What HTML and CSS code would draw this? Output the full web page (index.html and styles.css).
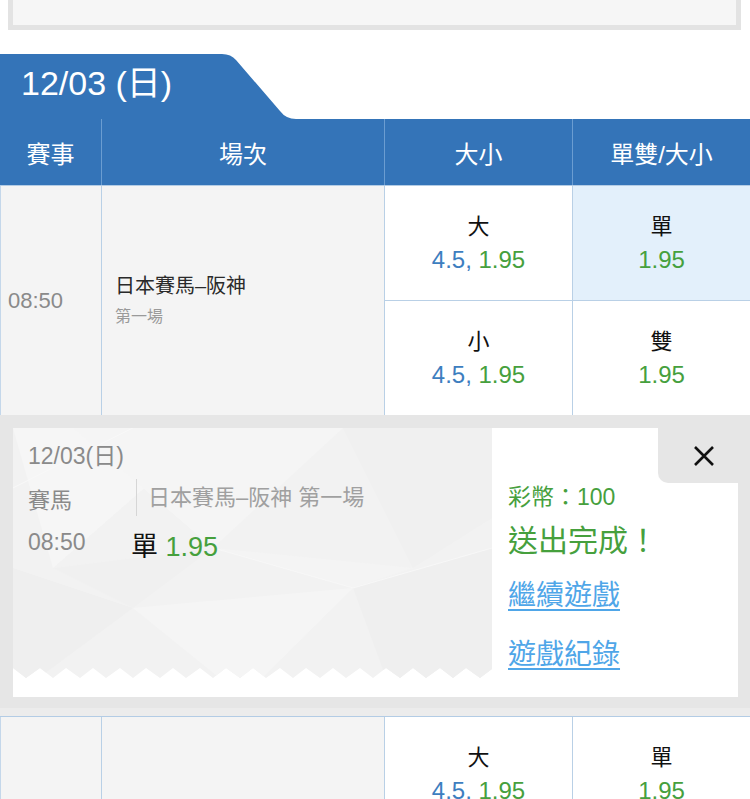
FILE: index.html
```html
<!DOCTYPE html>
<html lang="zh-Hant">
<head>
<meta charset="utf-8">
<title>賽事</title>
<link rel="stylesheet" href="styles.css">
</head>
<body>
<div class="topbox"></div>

<section class="day">
  <div class="tab">
    <svg class="tab-shape" viewBox="0 0 300 65" width="300" height="65" aria-hidden="true">
      <path d="M0 0 H222 Q231 0 236 6 L280 57 Q286 65 296 65 L300 65 V65 H0 Z" fill="#3474b8"/>
    </svg>
    <span class="tab-text">12/03 (日)</span>
  </div>

  <div class="thead">
    <div class="th">賽事</div>
    <div class="th">場次</div>
    <div class="th">大小</div>
    <div class="th">單雙/大小</div>
  </div>

  <div class="row">
    <div class="cell time">08:50</div>
    <div class="cell race">
      <div class="race-name">日本賽馬–阪神</div>
      <div class="race-no">第一場</div>
    </div>
    <div class="odds-col">
      <div class="odd"><div class="odd-label">大</div><div class="odd-val"><span class="num-blue">4.5,</span> <span class="num-green">1.95</span></div></div>
      <div class="odd"><div class="odd-label">小</div><div class="odd-val"><span class="num-blue">4.5,</span> <span class="num-green">1.95</span></div></div>
    </div>
    <div class="odds-col">
      <div class="odd selected"><div class="odd-label">單</div><div class="odd-val"><span class="num-green">1.95</span></div></div>
      <div class="odd"><div class="odd-label">雙</div><div class="odd-val"><span class="num-green">1.95</span></div></div>
    </div>
  </div>

  <div class="band">
    <div class="ticket">
      <div class="ticket-main">
        <svg class="ticket-bg" viewBox="0 0 479 269" preserveAspectRatio="none" aria-hidden="true">
          <defs>
            <clipPath id="zz">
              <path d="M0 0 L0 240 L13 250 L27 240 L40 250 L53 240 L67 250 L80 240 L93 250 L107 240 L120 250 L133 240 L147 250 L160 240 L173 250 L187 240 L200 250 L213 240 L227 250 L240 240 L253 250 L267 240 L280 250 L293 240 L307 250 L320 240 L333 250 L347 240 L360 250 L373 240 L387 250 L400 240 L413 250 L427 240 L440 250 L453 240 L467 250 L479 241 L479 0 Z"/>
            </clipPath>
          </defs>
          <g clip-path="url(#zz)">
            <rect x="0" y="0" width="479" height="269" fill="#f2f2f2"/>
            <polygon points="0,0 200,0 40,140" fill="#f6f6f6"/>
            <polygon points="60,0 330,0 200,120" fill="#f5f5f5"/>
            <polygon points="330,0 479,0 479,90 400,140" fill="#f0f0f0"/>
            <polygon points="0,140 120,180 0,269" fill="#efefef"/>
            <polygon points="120,180 340,160 230,269" fill="#f5f5f5"/>
            <polygon points="340,160 479,120 479,269 380,269" fill="#efefef"/>
            <polygon points="40,140 200,120 120,180" fill="#f0f0f0"/>
            <polygon points="200,120 400,140 340,160" fill="#f4f4f4"/>
            <polyline points="0,60 120,0" fill="none" stroke="#f8f8f8" stroke-width="1"/>
            <polyline points="200,120 340,160 479,120" fill="none" stroke="#f7f7f7" stroke-width="1"/>
          </g>
        </svg>
        <div class="t-date">12/03(日)</div>
        <div class="t-race">
          <div class="t-label">賽馬</div>
          <div class="t-event">日本賽馬–阪神 第一場</div>
        </div>
        <div class="t-bet-row">
          <div class="t-time">08:50</div>
          <div class="t-bet">單 <span class="num-green">1.95</span></div>
        </div>
      </div>
      <div class="ticket-side">
        <div class="t-stake">彩幣：100</div>
        <div class="t-done">送出完成！</div>
        <a class="t-link first" href="#">繼續遊戲</a>
        <a class="t-link" href="#">遊戲紀錄</a>
      </div>
      <div class="t-close" aria-label="關閉">
        <svg viewBox="0 0 22 22" width="22" height="22" aria-hidden="true">
          <path d="M2 2 L20 20 M20 2 L2 20" stroke="#111" stroke-width="2.6" stroke-linecap="butt" fill="none"/>
        </svg>
      </div>
    </div>
  </div>

  <div class="row">
    <div class="cell time">08:50</div>
    <div class="cell race">
      <div class="race-name">日本賽馬–阪神</div>
      <div class="race-no">第二場</div>
    </div>
    <div class="odds-col">
      <div class="odd"><div class="odd-label">大</div><div class="odd-val"><span class="num-blue">4.5,</span> <span class="num-green">1.95</span></div></div>
      <div class="odd"><div class="odd-label">小</div><div class="odd-val"><span class="num-blue">4.5,</span> <span class="num-green">1.95</span></div></div>
    </div>
    <div class="odds-col">
      <div class="odd"><div class="odd-label">單</div><div class="odd-val"><span class="num-green">1.95</span></div></div>
      <div class="odd"><div class="odd-label">雙</div><div class="odd-val"><span class="num-green">1.95</span></div></div>
    </div>
  </div>
</section>
</body>
</html>
```

FILE: styles.css
```css
* { box-sizing: border-box; }

html, body {
  margin: 0;
  padding: 0;
}

body {
  width: 750px;
  height: 799px;
  overflow: hidden;
  background: #ffffff;
  font-family: "Liberation Sans", "Noto Sans CJK TC", sans-serif;
  color: #222;
}

.topbox {
  height: 30px;
  margin: 0 9px 24px 8px;
  background: #f6f6f6;
  border: 5px solid #e3e3e3;
  border-top: 0;
}

.tab {
  position: relative;
  width: 300px;
  height: 65px;
}

.tab-shape {
  position: absolute;
  left: 0;
  top: 0;
  display: block;
}

.tab-text {
  position: relative;
  display: block;
  padding-left: 21px;
  line-height: 58px;
  font-size: 34px;
  color: #ffffff;
}

.thead {
  display: grid;
  grid-template-columns: 101px 283px 188px 178px;
  height: 66px;
  background: #3474b8;
}

.th {
  display: flex;
  align-items: center;
  justify-content: center;
  color: #ffffff;
  font-size: 24px;
}

.th + .th {
  border-left: 1px solid #6b9dd1;
}

.row {
  display: grid;
  grid-template-columns: 101px 283px 188px 178px;
  height: 230px;
  border-top: 1px solid #b3cce5;
}

.cell {
  background: #f4f4f4;
  display: flex;
}

.time {
  align-items: center;
  padding-left: 7px;
  border-left: 1px solid #c4d7ea;
  font-size: 22px;
  color: #8a8a8a;
}

.race {
  flex-direction: column;
  justify-content: center;
  padding: 0 0 1px 13px;
  border-left: 1px solid #b9d0e6;
}

.race-name {
  font-size: 20px;
  line-height: 30px;
  color: #2a2a2a;
}

.race-no {
  margin-top: 4px;
  font-size: 16px;
  line-height: 24px;
  color: #9a9a9a;
}

.odds-col {
  display: flex;
  flex-direction: column;
  border-left: 1px solid #b9d0e6;
  background: #ffffff;
}

.odd {
  flex: 1;
  display: flex;
  flex-direction: column;
  align-items: center;
  justify-content: center;
  padding-top: 2px;
}

.odd + .odd {
  border-top: 1px solid #b9d0e6;
}

.odd.selected {
  background: #e3f0fb;
}

.odd-label {
  font-size: 22px;
  line-height: 32px;
  color: #111;
}

.odd-val {
  font-size: 24px;
  line-height: 34px;
}

.num-blue { color: #3d7ebf; }
.num-green { color: #46a03d; }

.band {
  background: #e6e6e6;
  padding: 13px 12px 11px 13px;
  border-bottom: 8px solid #ececec;
}

.ticket {
  position: relative;
  display: flex;
  height: 269px;
  background: #ffffff;
}

.ticket-main {
  position: relative;
  width: 479px;
  padding: 13px 0 0 15px;
  color: #8a8a8a;
  font-size: 23px;
}

.ticket-bg {
  position: absolute;
  left: 0;
  top: 0;
  width: 479px;
  height: 269px;
}

.t-date,
.t-race,
.t-bet-row {
  position: relative;
}

.t-date {
  line-height: 30px;
}

.t-race {
  display: flex;
  align-items: center;
  margin-top: 8px;
  height: 37px;
}

.t-label {
  width: 108px;
  font-size: 22px;
}

.t-event {
  height: 37px;
  line-height: 37px;
  padding-left: 11px;
  border-left: 1px solid #d6d6d6;
  font-size: 22px;
  color: #a0a0a0;
}

.t-bet-row {
  display: flex;
  margin-top: 11px;
}

.t-time {
  width: 103px;
  line-height: 30px;
}

.t-bet {
  margin-top: 4px;
  line-height: 32px;
  font-size: 27px;
  color: #111;
}

.ticket-side {
  flex: 1;
  padding: 54px 0 0 16px;
}

.t-stake {
  font-size: 23px;
  line-height: 30px;
  color: #46a03d;
}

.t-done {
  margin-top: 9px;
  font-size: 30px;
  line-height: 40px;
  color: #46a03d;
}

.t-link {
  display: block;
  margin-top: 23px;
  font-size: 28px;
  line-height: 36px;
  color: #4fa6e8;
  text-decoration: underline;
  text-decoration-thickness: 2px;
  text-underline-offset: 4px;
}

.t-link.first {
  margin-top: 17px;
}

.t-close {
  position: absolute;
  top: 0;
  right: 0;
  width: 80px;
  height: 55px;
  padding-left: 12px;
  display: flex;
  align-items: center;
  justify-content: center;
  background: #e6e6e6;
  border-bottom-left-radius: 10px;
}
```
